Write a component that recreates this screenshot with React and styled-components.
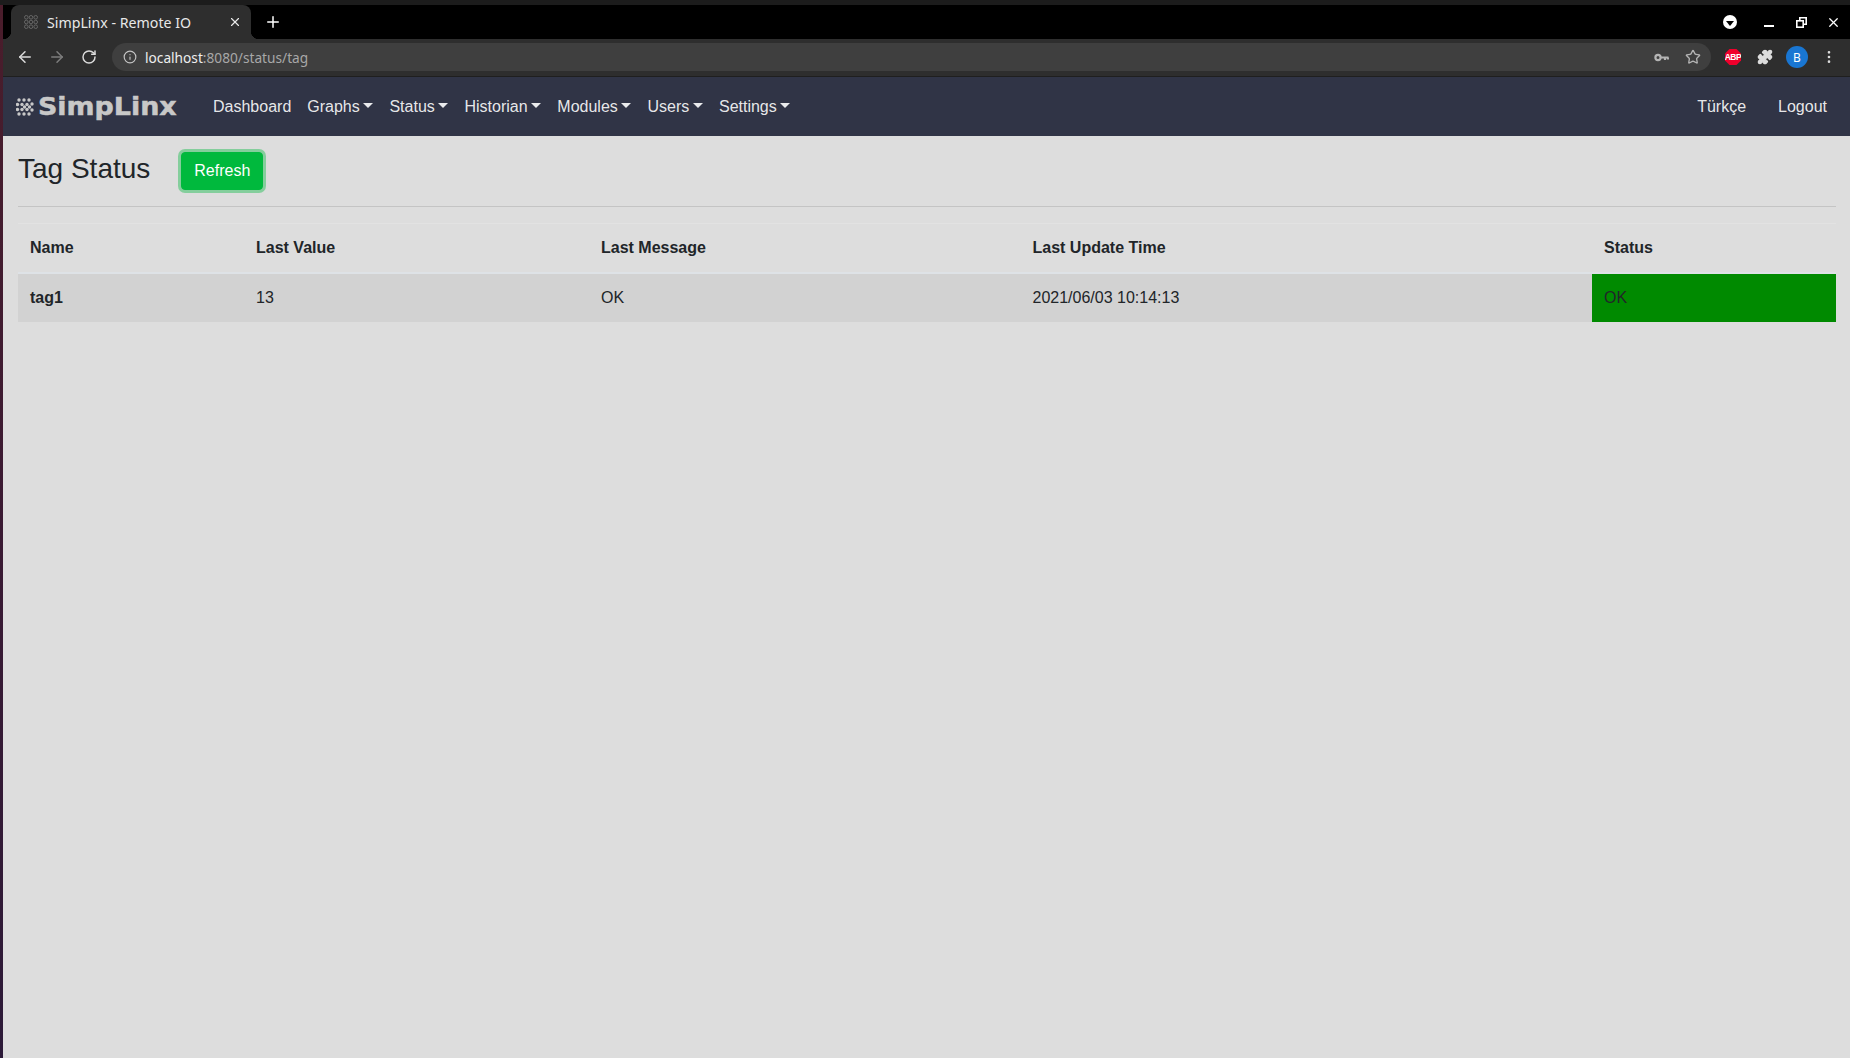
import React from 'react';
import styled, { createGlobalStyle } from 'styled-components';
import {
  ArrowLeft,
  ArrowRight,
  RotateCw,
  Info,
  Star,
  Puzzle,
  X,
  Plus,
  EllipsisVertical,
} from 'lucide-react';

const GlobalStyle = createGlobalStyle`
  html, body {
    margin: 0;
    padding: 0;
    height: 100%;
    background: #dddddd;
    font-family: "Liberation Sans", Arial, sans-serif;
    overflow: hidden;
  }
  * { box-sizing: border-box; }
`;

const Screen = styled.div`
  width: 1850px;
  height: 1058px;
  display: flex;
  flex-direction: column;
`;

const TopEdge = styled.div`
  height: 5px;
  background: #1c1c1c;
  flex: none;
`;

const Desktop = styled.div`
  flex: 1;
  display: flex;
  min-height: 0;
`;

const WallpaperStrip = styled.div`
  width: 3px;
  flex: none;
  background: linear-gradient(180deg, #4a1d2b 0%, #3a1a33 50%, #2c1a38 100%);
`;

const Window = styled.div`
  flex: 1;
  min-width: 0;
  display: flex;
  flex-direction: column;
`;

/* browser chrome */
const TabStrip = styled.div`
  height: 34px;
  background: #000;
  display: flex;
  align-items: flex-end;
  padding-left: 8px;
  flex: none;
`;

const Tab = styled.div`
  position: relative;
  width: 240px;
  height: 34px;
  background: #2e2e2e;
  border-radius: 8px 8px 0 0;
  display: flex;
  align-items: center;
  padding: 0 9px 0 13px;
  color: #e8e8e8;
  font: 14.2px "Noto Sans", sans-serif;

  &::before,
  &::after {
    content: '';
    position: absolute;
    bottom: 0;
    width: 8px;
    height: 8px;
  }
  &::before {
    left: -8px;
    background: radial-gradient(circle at 0 0, #000 8px, #2e2e2e 8.5px);
  }
  &::after {
    right: -8px;
    background: radial-gradient(circle at 100% 0, #000 8px, #2e2e2e 8.5px);
  }
`;

const TabTitle = styled.span`
  flex: 1;
  margin-left: 9px;
  white-space: nowrap;
`;

const NewTab = styled.div`
  width: 28px;
  height: 28px;
  margin-left: 8px;
  margin-bottom: 3px;
  display: flex;
  align-items: center;
  justify-content: center;
  color: #fff;
`;

const WindowControls = styled.div`
  margin-left: auto;
  height: 34px;
  display: flex;
  align-items: center;
  padding-right: 1px;
  color: #fff;
`;

const ProfileMenu = styled.div`
  width: 14px;
  height: 14px;
  border-radius: 50%;
  background: #fff;
  margin-right: 16px;
  display: flex;
  align-items: center;
  justify-content: center;

  &::after {
    content: '';
    margin-top: 3px;
    border-top: 5px solid #000;
    border-left: 4px solid transparent;
    border-right: 4px solid transparent;
  }
`;

const WindowButton = styled.div`
  width: 32px;
  display: flex;
  justify-content: center;
  align-items: center;
`;

const MinimizeBar = styled.div`
  width: 10px;
  height: 2px;
  margin-top: 8px;
  background: #fff;
`;

const Toolbar = styled.div`
  height: 38px;
  background: #2e2e2e;
  border-bottom: 1px solid #1f1f1f;
  display: flex;
  align-items: center;
  padding: 0 0 1px 6px;
  flex: none;
`;

const ToolButton = styled.div`
  width: 32px;
  height: 28px;
  display: flex;
  align-items: center;
  justify-content: center;
  color: ${({ $dim }) => ($dim ? '#7d7d7d' : '#dcdcdc')};
`;

const Omnibox = styled.div`
  width: 1599px;
  height: 28px;
  margin-left: 7px;
  margin-right: 6px;
  border-radius: 14px;
  background: #3f3f3f;
  display: flex;
  align-items: center;
  padding: 0 2px 0 11px;
  font: 13.7px "Noto Sans", sans-serif;
  color: #a8a8a8;
`;

const Host = styled.span`
  color: #eeeeee;
`;

const Url = styled.span`
  margin-left: 8px;
  flex: 1;
`;

const OmniIcon = styled.div`
  width: 32px;
  display: flex;
  justify-content: center;
  color: #b4b4b4;
`;

const AbpBadge = styled.div`
  width: 16px;
  height: 16px;
  background: #f0002c;
  clip-path: polygon(28% 0, 72% 0, 100% 28%, 100% 72%, 72% 100%, 28% 100%, 0 72%, 0 28%);
  color: #fff;
  font: bold 8.5px "Liberation Sans", sans-serif;
  letter-spacing: -0.4px;
  display: flex;
  align-items: center;
  justify-content: center;
`;

const Avatar = styled.div`
  width: 22px;
  height: 22px;
  border-radius: 50%;
  background: #1976d2;
  color: #fff;
  font: 12px "Noto Sans", sans-serif;
  display: flex;
  align-items: center;
  justify-content: center;
`;

/* app navbar */
const Navbar = styled.nav`
  height: 59px;
  background: #303446;
  display: flex;
  align-items: center;
  padding: 0 15px 0 13px;
  flex: none;
`;

const Brand = styled.div`
  display: flex;
  align-items: center;
  width: 189px;
  flex: none;
  color: #c8c8c8;
`;

const BrandText = styled.span`
  margin-left: 4px;
  display: inline-block;
  font: bold 24px/24px "DejaVu Sans", sans-serif;
  -webkit-text-stroke: 0.5px #c8c8c8;
  transform: scaleX(1.12);
  transform-origin: left center;
`;

const NavLink = styled.a`
  padding: 8px;
  color: rgba(255, 255, 255, 0.9);
  font-size: 16px;
  line-height: 24px;
  white-space: nowrap;
  margin-left: ${({ $gap }) => ($gap ? '16px' : '0')};

  ${({ $caret }) =>
    $caret &&
    `&::after {
      content: '';
      display: inline-block;
      margin-left: 3.7px;
      vertical-align: 4px;
      border-top: 5px solid;
      border-right: 5px solid transparent;
      border-left: 5px solid transparent;
    }`}
`;

const NavSpacer = styled.div`
  flex: 1;
`;

/* page */
const Content = styled.main`
  flex: 1;
  background: #dddddd;
  padding: 16px 14px 0 15px;
  color: #212529;
`;

const PageHead = styled.div`
  display: flex;
  align-items: center;
  height: 38px;
`;

const Title = styled.h3`
  margin: 0 0 6px;
  font-size: 28px;
  font-weight: 500;
  line-height: 33px;
`;

const RefreshButton = styled.button`
  margin-left: 31px;
  width: 82px;
  height: 38px;
  background: #00b93d;
  border: 1px solid #00b93d;
  border-radius: 4px;
  box-shadow: 0 0 0 3px rgba(0, 185, 61, 0.4);
  color: #fff;
  font: 16px/24px "Liberation Sans", sans-serif;
  padding: 0;
`;

const Rule = styled.hr`
  margin: 16px 0;
  border: 0;
  border-top: 1px solid #c4c4c4;
`;

const Table = styled.table`
  width: 100%;
  table-layout: fixed;
  border-collapse: collapse;
  font-size: 16px;
  line-height: 24px;
`;

const HeadCell = styled.th`
  padding: 12px;
  text-align: left;
  font-weight: 700;
  border-top: 1px solid #e2e2e2;
  border-bottom: 2px solid #dee2e6;
`;

const Row = styled.tr`
  background: #d2d2d2;
`;

const Cell = styled.td`
  padding: 12px;
  font-weight: ${({ $bold }) => ($bold ? 700 : 400)};
`;

const StatusCell = styled(Cell)`
  background: #008a00;
`;

const logoDots = [
  [3, 2], [8, 2], [13, 2],
  [1.5, 6.5], [6, 6.5], [11, 6.5], [16, 6],
  [8.5, 9], [13.5, 9],
  [1.5, 11.5], [6, 11.5], [11, 11.5], [16, 12],
  [3, 16], [8, 16], [13, 16],
];

const LogoMark = () => (
  <svg width="18" height="18" viewBox="0 0 18 18" fill="currentColor">
    {logoDots.map(([x, y]) => (
      <circle key={`${x}-${y}`} cx={x} cy={y} r="1.7" />
    ))}
  </svg>
);

const Favicon = () => (
  <svg width="14" height="14" viewBox="0 0 14 14" fill="none" stroke="#666" strokeWidth="1">
    {[2.3, 7, 11.7].flatMap((y) =>
      [2.3, 7, 11.7].map((x) => <circle key={`${x}-${y}`} cx={x} cy={y} r="1.8" />)
    )}
  </svg>
);

const RestoreIcon = () => (
  <svg width="11" height="11" viewBox="0 0 11 11" fill="none" stroke="#fff" strokeWidth="1.6">
    <rect x="0.8" y="3.8" width="6.4" height="6.4" />
    <path d="M3.8 3.8V0.8h6.4v6.4H7.2" />
  </svg>
);

const KeyIcon = () => (
  <svg width="15" height="15" viewBox="0 0 15 15" fill="none" stroke="currentColor">
    <circle cx="4" cy="7.5" r="2.6" strokeWidth="2.2" />
    <path d="M7 7.5h7.5M11 7.5v2.5M14 7.5v2" strokeWidth="2.2" />
  </svg>
);

const columns = [
  { label: 'Name', width: 226 },
  { label: 'Last Value', width: 345 },
  { label: 'Last Message', width: 431.5 },
  { label: 'Last Update Time', width: 571.5 },
  { label: 'Status', width: 244 },
];

const App = () => (
  <Screen>
    <GlobalStyle />
    <TopEdge />
    <Desktop>
      <WallpaperStrip />
      <Window>
        <TabStrip>
          <Tab>
            <Favicon />
            <TabTitle>SimpLinx - Remote IO</TabTitle>
            <X size={14} strokeWidth={2} />
          </Tab>
          <NewTab>
            <Plus size={18} strokeWidth={2} />
          </NewTab>
          <WindowControls>
            <ProfileMenu />
            <WindowButton>
              <MinimizeBar />
            </WindowButton>
            <WindowButton>
              <RestoreIcon />
            </WindowButton>
            <WindowButton>
              <X size={15} strokeWidth={2} />
            </WindowButton>
          </WindowControls>
        </TabStrip>
        <Toolbar>
          <ToolButton>
            <ArrowLeft size={18} strokeWidth={2} />
          </ToolButton>
          <ToolButton $dim>
            <ArrowRight size={18} strokeWidth={2} />
          </ToolButton>
          <ToolButton>
            <RotateCw size={16} strokeWidth={2.2} />
          </ToolButton>
          <Omnibox>
            <Info size={14} color="#c4c4c4" />
            <Url>
              <Host>localhost</Host>:8080/status/tag
            </Url>
            <OmniIcon>
              <KeyIcon />
            </OmniIcon>
            <OmniIcon>
              <Star size={16} strokeWidth={2} />
            </OmniIcon>
          </Omnibox>
          <ToolButton>
            <AbpBadge>ABP</AbpBadge>
          </ToolButton>
          <ToolButton>
            <Puzzle size={16} fill="#dcdcdc" />
          </ToolButton>
          <ToolButton>
            <Avatar>B</Avatar>
          </ToolButton>
          <ToolButton>
            <EllipsisVertical size={16} />
          </ToolButton>
        </Toolbar>
        <Navbar>
          <Brand>
            <LogoMark />
            <BrandText>SimpLinx</BrandText>
          </Brand>
          <NavLink>Dashboard</NavLink>
          <NavLink $caret>Graphs</NavLink>
          <NavLink $caret>Status</NavLink>
          <NavLink $caret>Historian</NavLink>
          <NavLink $caret>Modules</NavLink>
          <NavLink $caret>Users</NavLink>
          <NavLink $caret>Settings</NavLink>
          <NavSpacer />
          <NavLink>Türkçe</NavLink>
          <NavLink $gap>Logout</NavLink>
        </Navbar>
        <Content>
          <PageHead>
            <Title>Tag Status</Title>
            <RefreshButton>Refresh</RefreshButton>
          </PageHead>
          <Rule />
          <Table>
            <colgroup>
              {columns.map((c) => (
                <col key={c.label} style={{ width: c.width }} />
              ))}
            </colgroup>
            <thead>
              <tr>
                {columns.map((c) => (
                  <HeadCell key={c.label}>{c.label}</HeadCell>
                ))}
              </tr>
            </thead>
            <tbody>
              <Row>
                <Cell $bold>tag1</Cell>
                <Cell>13</Cell>
                <Cell>OK</Cell>
                <Cell>2021/06/03 10:14:13</Cell>
                <StatusCell>OK</StatusCell>
              </Row>
            </tbody>
          </Table>
        </Content>
      </Window>
    </Desktop>
  </Screen>
);

export default App;
